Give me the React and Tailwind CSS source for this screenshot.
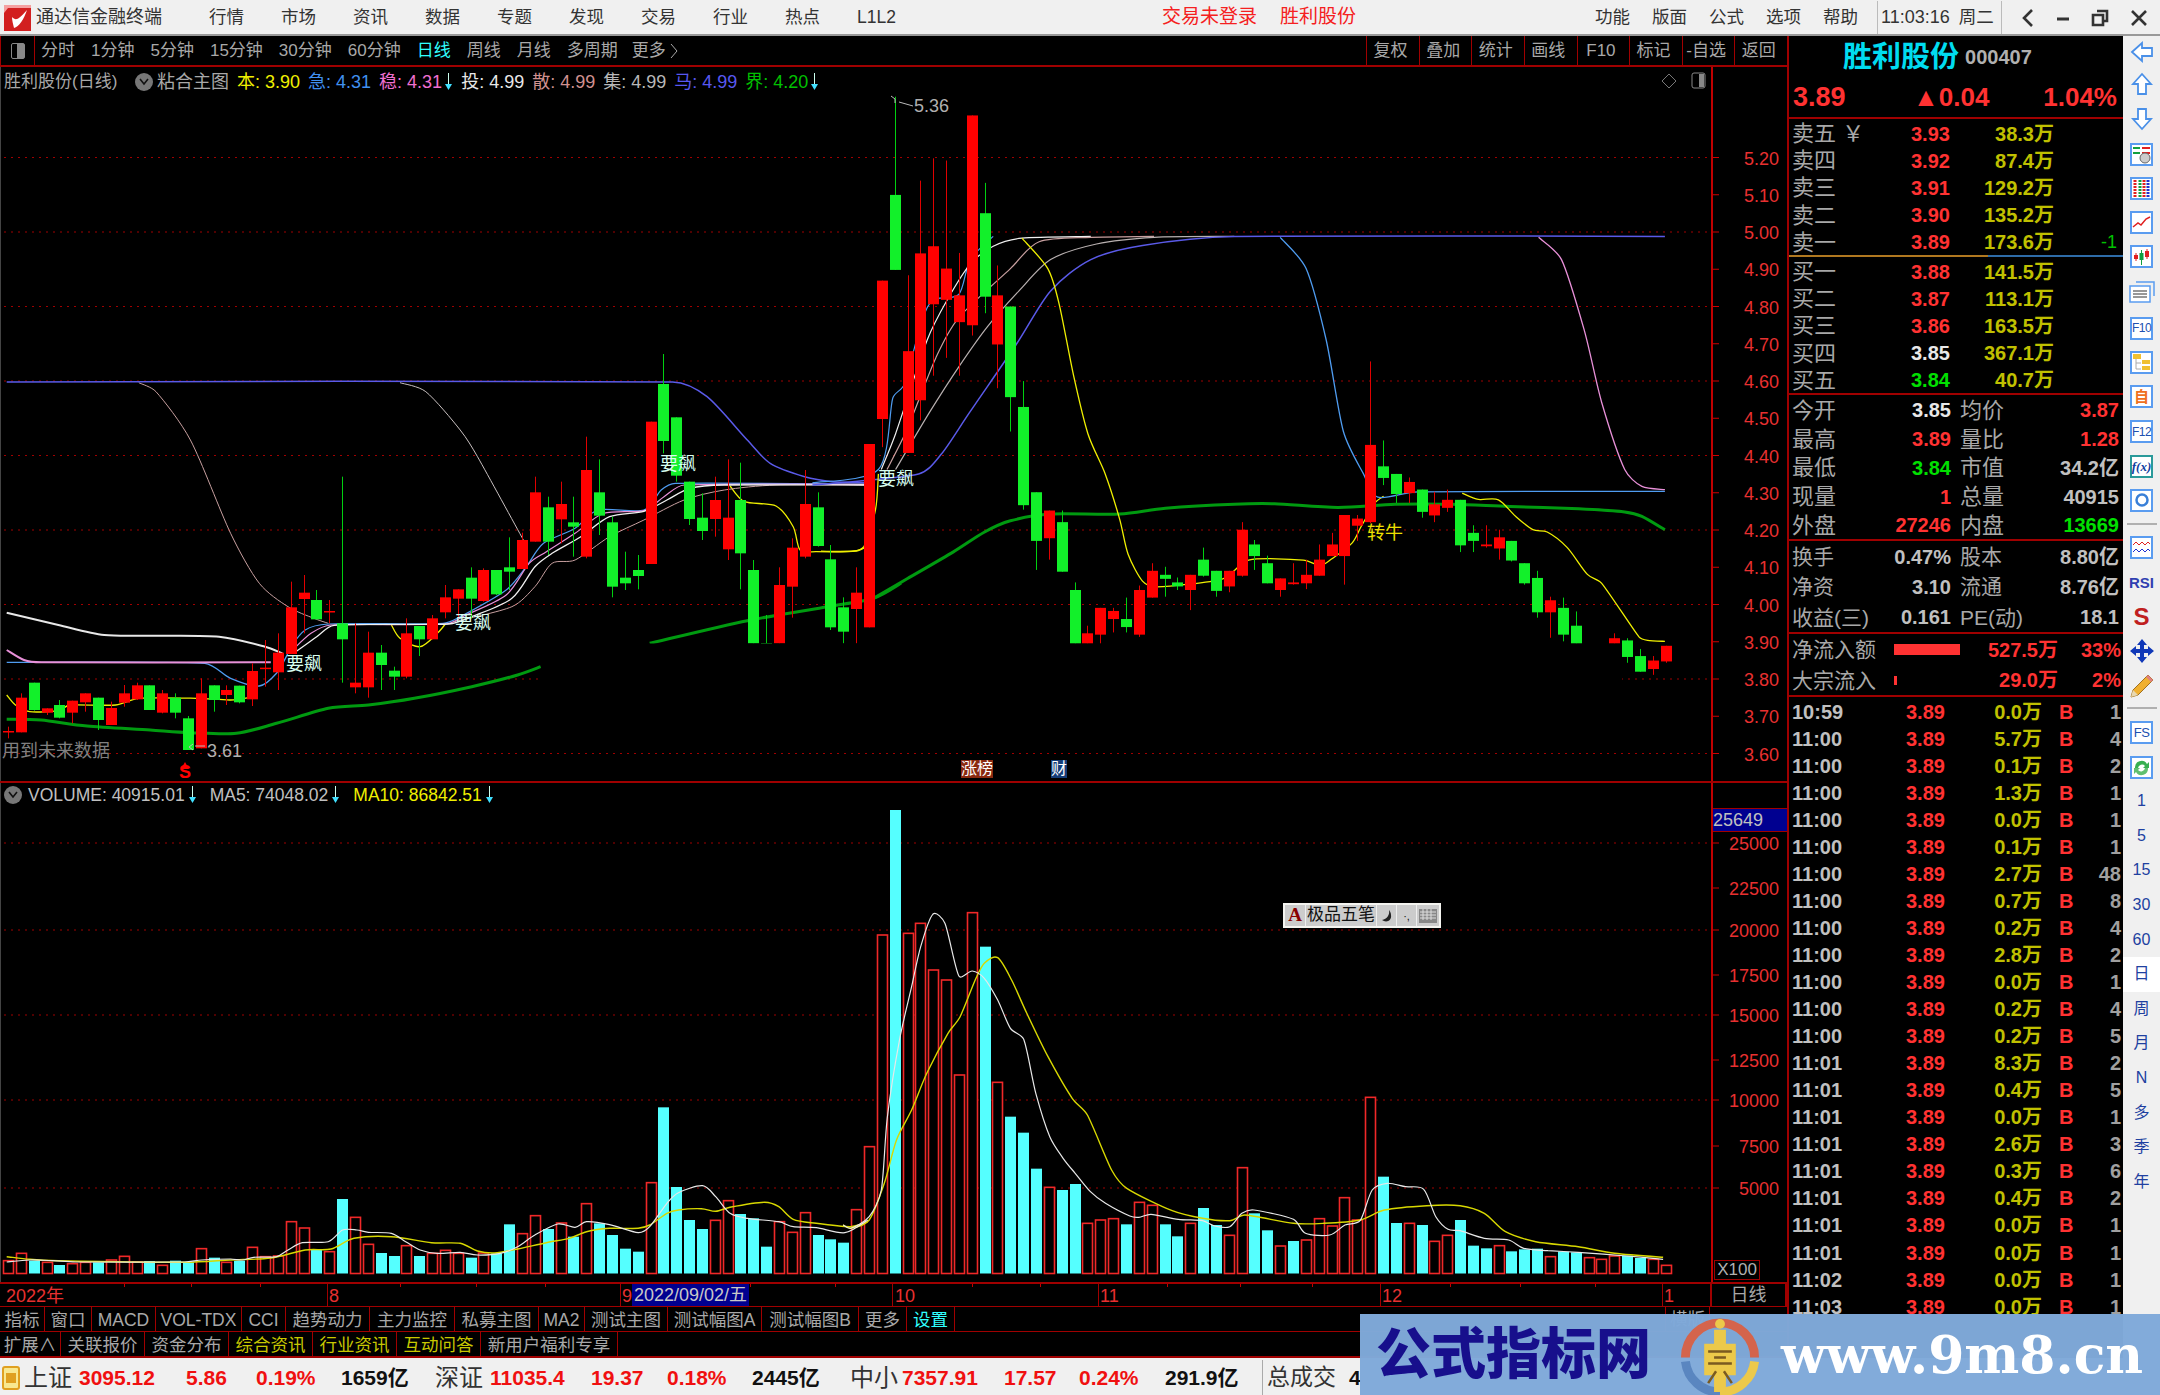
import React from 'react';

// reference zoom crops -> page pixels
const z7 = ([x, y]) => [x / 1.742, 350 + y / 3];
const z8 = ([x, y]) => [820 + x / 1.742, 90 + y / 2.24];
const z9 = ([x, y]) => [x / 1.742, 1050 + y / 3];
const z10 = ([x, y]) => [850 + x / 1.65, 800 + y / 3];

// mild catmull-rom, handles capped to the segment so long flats don't overshoot
const handle = (dx, dy, len) => {
  const n = Math.hypot(dx, dy) || 1;
  const k = Math.min(n / 7, len / 3) / n;
  return [dx * k, dy * k];
};
const smooth = (arr, f) => {
  const p = arr.map(f);
  let d = `M${p[0][0].toFixed(1)} ${p[0][1].toFixed(1)}`;
  for (let i = 0; i < p.length - 1; i++) {
    const a = p[Math.max(i - 1, 0)];
    const b = p[i];
    const c = p[i + 1];
    const e = p[Math.min(i + 2, p.length - 1)];
    const len = Math.hypot(c[0] - b[0], c[1] - b[1]);
    const h1 = handle(c[0] - a[0], c[1] - a[1], len);
    const h2 = handle(e[0] - b[0], e[1] - b[1], len);
    d += `C${(b[0] + h1[0]).toFixed(1)} ${(b[1] + h1[1]).toFixed(1)} ${(c[0] - h2[0]).toFixed(1)} ${(c[1] - h2[1]).toFixed(1)} ${c[0].toFixed(1)} ${c[1].toFixed(1)}`;
  }
  return d;
};

// top, bottom, wick top, wick bottom, colour
const CANDLES_A = [
  [1143,1147,1130,1165,'r'],[1043,1147,1030,1147,'r'],[998,1080,998,1082,'g'],[1075,1088,1075,1095,'r'],[1065,1103,1050,1105,'g'],
  [1052,1088,1052,1120,'r'],[1030,1057,1030,1085,'r'],[1043,1110,1043,1140,'g'],[1074,1125,1055,1125,'r'],[1030,1058,1005,1070,'r'],
  [1006,1048,998,1050,'r'],[1006,1080,1006,1080,'g'],[1030,1088,1020,1090,'r'],[1043,1088,1030,1105,'g'],[1105,1200,1098,1200,'g'],
  [1030,1195,985,1195,'r'],[1006,1050,1006,1085,'g'],[1020,1035,1006,1065,'r'],[1007,1057,1007,1060,'g'],[963,1048,940,1068,'r'],
  [953,957,870,1010,'r'],[908,967,850,1020,'r'],[772,912,695,912,'r'],[728,747,675,850,'r'],[750,808,720,808,'g'],
  [783,787,750,820,'r'],[820,868,380,998,'g'],[998,1012,820,1030,'r'],[908,1012,845,1043,'r'],[908,945,885,1020,'g'],
  [962,980,950,1020,'g'],[850,980,805,985,'r'],[828,868,828,918,'g'],[805,868,795,868,'r'],[742,787,705,805,'r'],
  [718,746,718,805,'r'],[683,746,652,805,'g'],[660,753,655,755,'r'],[660,733,660,735,'g'],[652,665,562,720,'g'],
  [570,657,548,657,'r'],[427,575,380,575,'r'],[472,575,440,615,'g'],[462,508,395,580,'r'],[517,530,440,620,'g'],
  [360,620,260,625,'r'],[427,497,328,555,'g'],[517,710,500,742,'g'],[683,700,605,720,'g'],[660,678,615,718,'g'],
  [215,642,215,642,'r'],[102,273,12,310,'g'],[202,377,202,395,'g'],[395,507,395,525,'g'],[503,543,430,570,'g'],
  [450,507,380,560,'r'],[503,598,328,630,'r'],[450,610,338,718,'g'],[660,880,630,880,'g'],[880,900,795,880,'g'],
  [705,880,652,880,'r'],[593,710,565,803,'r'],[462,620,360,625,'r'],[472,588,427,590,'g'],[628,832,585,840,'g'],
  [772,845,742,880,'g'],[728,777,652,880,'r'],[282,832,282,832,'r'],
];
const CANDLES_B = [
  [427,737,427,800,'r'],[235,403,15,403,'g'],[585,813,415,813,'r'],[366,695,203,740,'r'],[350,480,153,640,'r'],
  [400,470,158,600,'r'],[460,520,365,640,'r'],[57,527,57,550,'r'],[276,463,208,500,'g'],[460,570,393,668,'r'],
  [485,688,485,765,'g'],[710,930,652,940,'g'],[901,1010,901,1075,'g'],[942,1004,942,1052,'r'],[968,1079,942,1079,'g'],
  [1120,1240,1103,1240,'g'],[1217,1240,1200,1240,'r'],[1160,1220,1160,1240,'r'],[1167,1185,1160,1215,'r'],[1185,1203,1137,1215,'g'],
  [1120,1220,1110,1225,'r'],[1077,1137,1060,1137,'r'],[1086,1095,1068,1135,'g'],[1103,1112,1092,1120,'g'],[1086,1120,1086,1165,'r'],
  [1052,1088,1025,1090,'g'],[1077,1122,1077,1135,'g'],[1077,1112,1077,1125,'r'],[985,1088,968,1090,'r'],[1018,1044,1008,1075,'g'],
  [1060,1105,1043,1105,'g'],[1094,1120,1094,1135,'r'],[1103,1107,1060,1108,'r'],[1086,1105,1052,1118,'r'],[1052,1088,1018,1088,'r'],
  [1018,1044,992,1044,'r'],[952,1044,952,1108,'r'],[960,976,952,1010,'r'],[795,968,608,970,'r'],[843,869,785,885,'g'],
  [860,905,860,925,'g'],[878,903,868,925,'r'],[895,945,895,958,'g'],[928,953,900,968,'r'],[918,936,895,945,'r'],
  [918,1020,918,1035,'g'],[992,1010,975,1035,'g'],[1018,1022,975,1025,'r'],[1002,1027,985,1052,'r'],[1010,1054,1010,1056,'g'],
  [1060,1105,1060,1108,'g'],[1093,1170,1077,1182,'g'],[1143,1170,1135,1227,'r'],[1160,1220,1137,1235,'g'],[1200,1240,1168,1240,'g'],
  [1260,1280,1260,1280,'g'],[1260,1280,1260,1280,'r'],[1228,1240,1217,1240,'r'],[1233,1270,1228,1283,'g'],[1268,1303,1252,1303,'g'],
  [1278,1297,1268,1310,'r'],[1245,1280,1245,1283,'r'],
];

const VOL_A = [
  [632,'r'],[610,'r'],[632,'c'],[637,'r'],[645,'c'],[641,'r'],[637,'r'],[637,'c'],[630,'r'],[619,'r'],[636,'r'],[633,'c'],[646,'r'],[632,'c'],[637,'c'],
  [596,'r'],[623,'c'],[637,'r'],[632,'c'],[592,'r'],[620,'r'],[618,'r'],[515,'r'],[534,'r'],[598,'c'],[605,'r'],[447,'c'],[502,'r'],[583,'r'],[609,'c'],
  [618,'c'],[587,'r'],[618,'c'],[610,'r'],[601,'r'],[610,'r'],[623,'c'],[609,'r'],[610,'c'],[523,'c'],[551,'r'],[497,'r'],[537,'c'],[519,'r'],[560,'c'],
  [461,'r'],[520,'c'],[555,'c'],[596,'c'],[605,'c'],[398,'r'],[172,'c'],[411,'c'],[510,'c'],[537,'c'],[511,'r'],[452,'r'],[492,'c'],[505,'c'],[590,'c'],
  [515,'r'],[547,'r'],[488,'r'],[555,'c'],[568,'c'],[578,'c'],[479,'r'],[290,'r'],
];
const VOL_B = [
  [405,'r'],[30,'c'],[400,'r'],[370,'r'],[510,'r'],[540,'r'],[825,'r'],[338,'r'],[440,'c'],[847,'r'],[950,'c'],[998,'c'],[1106,'c'],[1162,'r'],[1170,'c'],
  [1152,'c'],[1270,'r'],[1260,'r'],[1256,'r'],[1273,'c'],[1207,'r'],[1216,'r'],[1273,'c'],[1309,'c'],[1270,'r'],[1224,'c'],[1275,'c'],[1306,'r'],[1103,'r'],[1240,'c'],
  [1291,'c'],[1338,'r'],[1323,'c'],[1320,'r'],[1256,'r'],[1278,'r'],[1193,'r'],[1260,'r'],[892,'r'],[1130,'c'],[1269,'c'],[1270,'r'],[1275,'c'],[1324,'r'],[1306,'r'],
  [1260,'c'],[1337,'c'],[1345,'c'],[1337,'r'],[1354,'c'],[1348,'c'],[1346,'c'],[1370,'r'],[1355,'c'],[1357,'c'],[1373,'r'],[1378,'r'],[1368,'r'],[1367,'c'],[1374,'c'],[1378,'r'],[1396,'r'],
];

const PRICE_LINES = [
  { c: '#c8a0a0', w: 1, f: z7, p: [[240,98],[270,125],[330,270],[400,550],[450,700],[500,770],[545,805],[570,820]] },
  { c: '#c8c0c0', w: 1, f: z7, p: [[695,98],[740,125],[800,240],[830,320],[910,570]] },
  { c: '#e8e8e8', w: 2, f: z7, p: [[10,788],[100,825],[180,855],[270,857],[380,860],[460,890],[490,910]] },
  { c: '#4f9cf0', w: 1.3, f: z7, p: [[10,937],[70,937],[355,940],[400,985],[450,1008],[480,970],[500,910]] },
  { c: '#e890d8', w: 2, f: z7, p: [[10,900],[40,930],[70,937],[470,937]] },
  { c: '#f0f000', w: 1.3, f: z7, p: [[10,1035],[25,1065],[50,1085],[100,1082],[120,1065],[200,1065],[240,1045],[340,1045],[400,1050],[440,1040]] },
  { c: '#f0f000', w: 1.3, f: z7, p: [[680,825],[695,865],[730,890],[760,850],[775,820]] },
  { c: '#f0f000', w: 1.3, f: z7, p: [[1270,408],[1295,455],[1350,468],[1380,530],[1392,600],[1420,605],[1490,603],[1512,585]] },
  { c: '#5a5ae8', w: 1.5, f: z7, p: [[10,96],[1170,96],[1230,140],[1300,270],[1340,340],[1400,380],[1450,395],[1505,398]] },
  { c: '#c8a0a0', w: 1, f: z7, p: [[790,815],[890,770],[930,710],[960,640],[1000,630],[1060,560],[1120,510],[1190,450],[1260,420],[1350,405],[1505,405]] },
  { c: '#4f9cf0', w: 1.2, f: z7, p: [[500,900],[530,840],[570,822],[770,820],[800,800],[880,720],[915,650],[945,580],[1000,535],[1040,480],[1120,480],[1150,420],[1175,400],[1505,402]] },
  { c: '#e890d8', w: 1.2, f: z7, p: [[505,905],[540,850],[575,825],[775,822],[810,795],[880,735],[920,640],[950,605],[1000,550],[1050,490],[1120,482],[1155,440],[1190,405],[1505,403]] },
  { c: '#f0f0f0', w: 1.3, f: z7, p: [[510,910],[550,860],[580,826],[780,822],[820,800],[890,745],[930,650],[960,610],[1010,560],[1060,500],[1120,484],[1160,450],[1200,415],[1260,405],[1505,405]] },
  { c: '#009a10', w: 3, f: z7, p: [[10,1108],[70,1110],[150,1128],[260,1140],[330,1148],[410,1150],[480,1120],[570,1075],[640,1065],[720,1045],[820,1010],[900,975],[940,950]] },
  { c: '#009a10', w: 3, f: z7, p: [[1130,880],[1300,812],[1440,770],[1520,745],[1568,700]] },
  { c: '#009a10', w: 3, f: z8, p: [[90,1140],[150,1095],[230,1035],[285,990],[330,965],[400,950],[520,950],[600,937],[720,928],[790,927],[900,935],[1000,928],[1100,928],[1200,933],[1320,938],[1400,945],[1430,955],[1470,985]] },
  { c: '#4f9cf0', w: 1.2, f: z8, p: [[-15,880],[100,850],[125,690],[145,660],[175,520],[195,470],[240,458],[260,380],[300,328]] },
  { c: '#f0f0f0', w: 1.2, f: z8, p: [[105,850],[130,770],[185,560],[220,470],[260,390],[300,350],[350,332],[470,328]] },
  { c: '#c8a0a0', w: 1.2, f: z8, p: [[115,850],[150,760],[200,600],[240,510],[330,400],[380,340],[470,330],[580,328]] },
  { c: '#b8b0b0', w: 1.2, f: z8, p: [[130,850],[190,720],[240,620],[290,530],[345,450],[400,380],[480,345],[580,330],[720,328]] },
  { c: '#5a5ae8', w: 1.5, f: z8, p: [[-15,885],[170,860],[210,815],[260,720],[340,570],[400,450],[470,380],[560,348],[720,328],[1470,328]] },
  { c: '#f0f000', w: 1.3, f: z8, p: [[0,1033],[55,1033],[75,1022],[95,940],[100,860]] },
  { c: '#f0f000', w: 1.3, f: z8, p: [[350,332],[395,400],[415,480],[440,640],[465,770],[495,860],[520,960],[535,1040],[560,1100],[585,1113],[700,1095],[745,1053],[840,1053],[870,1065],[890,1050],[925,1015],[940,980],[965,925],[980,910]] },
  { c: '#f0f000', w: 1.3, f: z8, p: [[1117,903],[1145,917],[1180,918],[1210,955],[1240,985],[1265,990],[1300,1025],[1335,1085],[1360,1105],[1425,1225],[1440,1233],[1470,1235]] },
  { c: '#4f9cf0', w: 1.3, f: z8, p: [[800,330],[845,400],[880,560],[910,765],[945,860],[970,912],[1040,900],[1470,899]] },
  { c: '#e890d8', w: 1.3, f: z8, p: [[1250,330],[1290,380],[1330,540],[1360,700],[1400,850],[1430,888],[1470,895]] },
];

const WHITE_Z9 = [[10,636],[50,630],[90,632],[130,636],[320,636],[350,630],[400,627],[420,630],[440,622],[480,620],[500,600],[525,578],[570,575],[595,540],[620,540],[640,547],[680,550],[705,575],[730,600],[760,610],[800,607],[830,615],[870,610],[900,590],[930,555],[970,522],[1000,532],[1020,515],[1060,524],[1110,548],[1130,530],[1160,460],[1180,428],[1222,407],[1245,440],[1270,490],[1300,505],[1355,515],[1380,530],[1420,533],[1470,548],[1510,510]];
const WHITE_Z10 = [[-13,1275],[0,1285],[30,1250],[50,1170],[60,950],[80,720],[100,560],[115,440],[135,343],[155,370],[178,528],[200,513],[220,535],[242,600],[263,685],[285,718],[305,880],[328,1010],[350,1075],[370,1120],[395,1175],[420,1210],[460,1248],[475,1252],[495,1243],[540,1258],[580,1262],[600,1278],[625,1280],[645,1240],[665,1230],[730,1258],[750,1300],[790,1305],[815,1275],[840,1262],[860,1170],[885,1150],[915,1160],[945,1168],[965,1250],[985,1288],[1005,1292],[1045,1315],[1085,1320],[1110,1345],[1150,1352],[1200,1357],[1280,1368],[1340,1378]];
const YELLOW_Z9 = [[10,620],[50,628],[100,632],[320,637],[400,630],[470,624],[530,600],[575,597],[615,565],[680,560],[750,578],[800,580],[830,603],[860,609],[900,597],[950,578],[990,565],[1020,545],[1060,535],[1110,535],[1130,525],[1160,490],[1180,480],[1220,476],[1245,484],[1270,472],[1330,457],[1355,470],[1380,508],[1420,520],[1480,530],[1510,515]];
const YELLOW_Z10 = [[-13,1275],[0,1285],[30,1260],[55,1150],[75,1020],[100,930],[125,820],[160,700],[180,650],[205,540],[220,490],[242,473],[265,540],[290,640],[325,770],[365,895],[390,945],[430,1110],[455,1165],[530,1232],[580,1255],[625,1262],[650,1245],[730,1270],[780,1270],[840,1260],[880,1230],[950,1217],[1005,1217],[1045,1240],[1080,1295],[1130,1325],[1200,1340],[1260,1360],[1340,1372]];

const PRICE_AXIS = ['5.20','5.10','5.00','4.90','4.80','4.70','4.60','4.50','4.40','4.30','4.20','4.10','4.00','3.90','3.80','3.70','3.60'];
const VOL_AXIS = [['25000',843],['22500',888],['20000',930],['17500',975],['15000',1015],['12500',1060],['10000',1100],['7500',1146],['5000',1188]];

const barX = (i) => 7 + 12.85 * i;
const priceY = (p) => 232 - (p - 5) * 372.5;

function DownArrow() {
  return (
    <svg width="9" height="20" viewBox="0 0 9 20" className="shrink-0">
      <path d="M4.5 1V13" stroke="#cfe" strokeWidth="1" />
      <path d="M1 12H8L4.5 18Z" fill="#40e0ff" />
    </svg>
  );
}

function Chevron() {
  return (
    <span className="flex h-[18px] w-[18px] shrink-0 items-center justify-center rounded-full bg-[#777]">
      <svg width="10" height="8" viewBox="0 0 10 8"><path d="M1 1L5 6L9 1" stroke="#111" strokeWidth="1.6" fill="none" /></svg>
    </span>
  );
}

function LogoMark() {
  return (
    <svg width="27" height="26" viewBox="0 0 27 26">
      <rect width="27" height="26" fill="#d21f1f" />
      <path d="M0 0H27V3H4L0 8Z" fill="#f5a0a0" />
      <path d="M8 12C12 16 14 15 23 5C20 14 15 22 10 23C9 19 8 15 8 12Z" fill="#fff" />
    </svg>
  );
}

function TitleBar() {
  const menu = ['行情', '市场', '资讯', '数据', '专题', '发现', '交易', '行业', '热点', 'L1L2'];
  const right = ['功能', '版面', '公式', '选项', '帮助'];
  return (
    <div className="flex h-[36px] items-center border-b-2 border-[#999] bg-[#f0f0f0] pt-[1px] text-[17.5px] text-[#333]">
      <span className="ml-[4px]"><LogoMark /></span>
      <span className="ml-[5px] w-[173px] text-[18px]">通达信金融终端</span>
      <div className="flex gap-[37px]">
        {menu.map((m) => <span key={m} className="w-[35px] whitespace-nowrap">{m}</span>)}
      </div>
      <div className="ml-[270px] flex gap-[23px] text-[19px] text-[#f52020]">
        <span>交易未登录</span>
        <span>胜利股份</span>
      </div>
      <div className="ml-[239px] flex gap-[22px]">
        {right.map((m) => <span key={m} className="w-[35px] whitespace-nowrap">{m}</span>)}
      </div>
      <div className="ml-[19px] flex h-full items-center gap-[9px] border-x border-[#bbb] pl-[3px] pr-[7px]">
        <span className="text-[18px]">11:03:16</span>
        <span>周二</span>
      </div>
      <div className="ml-[19px] flex w-[127px] items-center justify-between">
        <svg width="14" height="20" viewBox="0 0 14 20"><path d="M11 2L3 10L11 18" stroke="#333" strokeWidth="2.6" fill="none" /></svg>
        <svg width="14" height="20" viewBox="0 0 14 20"><path d="M1 11H13" stroke="#333" strokeWidth="3" /></svg>
        <svg width="18" height="20" viewBox="0 0 18 20"><path d="M6 3H16V13H12M2 7H12V17H2Z" stroke="#333" strokeWidth="2.6" fill="none" /></svg>
        <svg width="18" height="20" viewBox="0 0 18 20"><path d="M2 3L16 17M16 3L2 17" stroke="#333" strokeWidth="2.6" /></svg>
      </div>
    </div>
  );
}

function Toolbar() {
  const periods = ['分时', '1分钟', '5分钟', '15分钟', '30分钟', '60分钟', '日线', '周线', '月线', '多周期'];
  const tools = ['复权', '叠加', '统计', '画线', 'F10', '标记', '-自选', '返回'];
  return (
    <div className="flex h-[31px] items-stretch justify-between border-b-2 border-[#a00000] bg-black text-[17px] text-[#a8a8a8]">
      <div className="flex items-center">
        <div className="flex h-full w-[35px] items-center justify-center border-x border-[#a00000]">
          <span className="flex h-[16px] w-[14px] items-center justify-end rounded-[2px] border border-[#888]"><span className="h-full w-[7px] bg-[#888]" /></span>
        </div>
        <div className="ml-[6px] flex items-center gap-[16px]">
          {periods.map((p) => (
            <span key={p} className={p === '日线' ? 'whitespace-nowrap text-[#30ffff]' : 'whitespace-nowrap'}>{p}</span>
          ))}
          <span className="-ml-[2px] flex items-center gap-[4px] whitespace-nowrap">更多
            <svg width="8" height="18" viewBox="0 0 8 18"><path d="M1 2L7 9L1 16" stroke="#aaa" fill="none" /></svg>
          </span>
        </div>
      </div>
      <div className="flex">
        {tools.map((t) => (
          <span key={t} className="flex w-[52.6px] items-center justify-center whitespace-nowrap border-l border-[#a00000] pr-[5px]">{t}</span>
        ))}
      </div>
    </div>
  );
}

function InfoRow() {
  const items = [
    ['本: 3.90', 'text-[#f0f000]'], ['急: 4.31', 'text-[#4090f0]'], ['稳: 4.31', 'text-[#f070d0]', true],
    ['投: 4.99', 'text-[#e8e8e8]'], ['散: 4.99', 'text-[#d09090]'], ['集: 4.99', 'text-[#b8b8b8]'],
    ['马: 4.99', 'text-[#5858f0]'], ['界: 4.20', 'text-[#00c000]', true],
  ];
  return (
    <div className="absolute left-[3px] top-[2px] flex h-[26px] items-center text-[18px]">
      <span className="w-[131px] whitespace-nowrap text-[17px] text-[#a8a8a8]">胜利股份(日线)</span>
      <Chevron />
      <span className="ml-[4px] mr-[8px] text-[#a8a8a8]">粘合主图</span>
      <div className="flex gap-[8px]">
        {items.map(([t, c, arrow]) => (
          <span key={t + c} className={`flex items-center gap-[2px] whitespace-nowrap ${c}`}>{t}{arrow && <DownArrow />}</span>
        ))}
      </div>
    </div>
  );
}

function PriceChart() {
  const candle = (data, f, start) =>
    data.map(([top, bot, wt, wb, col], k) => {
      const i = start + k;
      const x = barX(i);
      const [, y1] = f([0, top]);
      const [, y2] = f([0, bot]);
      const [, w1] = f([0, wt]);
      const [, w2] = f([0, wb]);
      const fill = col === 'r' ? '#ff0000' : '#12f02a';
      return (
        <g key={i}>
          <rect x={Math.round(x)} y={w1} width="1" height={Math.max(w2 - w1, 0)} fill={col === 'r' ? '#e00000' : '#00d010'} />
          <rect x={Math.round(x) - 5} y={y1} width="11" height={Math.max(y2 - y1, 1.5)} fill={fill} />
        </g>
      );
    });
  return (
    <div className="relative h-[714px] border-l border-[#444]">
      <svg width="1786" height="714" viewBox="0 67 1786 714" className="block">
        {[5.2, 5.0, 4.8, 4.6, 4.4, 4.2, 4.0, 3.8, 3.6].map((p) => (
          <line key={p} x1="3" x2="1710" y1={priceY(p)} y2={priceY(p)} stroke="#a00000" strokeWidth="1" strokeDasharray="2 5" />
        ))}
        {PRICE_LINES.map((l, i) => (
          <path key={i} d={smooth(l.p, l.f)} fill="none" stroke={l.c} strokeWidth={l.w} strokeLinejoin="round" />
        ))}
        {candle(CANDLES_A, z7, 0)}
        {candle(CANDLES_B, z8, 68)}
        {/* blacked out strip of the source picture */}
        <rect x="540" y="643.5" width="1081" height="101" fill="#000" />
        <rect x="1710" y="67" width="2" height="714" fill="#c00000" />
        {PRICE_AXIS.map((p) => (
          <line key={p} x1="1712" x2="1718" y1={priceY(Number(p))} y2={priceY(Number(p))} stroke="#d00000" />
        ))}
        <path d="M894 99L890 96M894 99V103M898 102L912 106" stroke="#bbb" fill="none" />
        <path d="M194 746H204M188 747L192 744M188 747L192 750" stroke="#bbb" fill="none" />
        <path d="M184 762L188 769H180Z" fill="#ff0000" />
        <path d="M1668 74L1675 81L1668 88L1661 81Z" stroke="#777" fill="none" />
        <rect x="1691" y="73" width="13" height="15" rx="2" stroke="#888" fill="none" />
        <rect x="1698" y="74" width="5" height="13" fill="#888" />
      </svg>
      <InfoRow />
      {PRICE_AXIS.map((p) => (
        <span key={p} className="absolute right-[8px] -translate-y-1/2 text-[18px] leading-none text-[#e83030]" style={{ top: priceY(Number(p)) - 66 }}>{p}</span>
      ))}
      <span className="absolute left-[913px] top-[30px] text-[18px] leading-none text-[#b0b0b0]">5.36</span>
      <span className="absolute left-[206px] top-[675px] text-[18px] leading-none text-[#b0b0b0]">3.61</span>
      <span className="absolute left-[1px] top-[675px] text-[18px] leading-none text-[#808080]">用到未来数据</span>
      <span className="absolute left-[178px] top-[696px] text-[18px] font-bold leading-none text-[#ff0000]">S</span>
      <span className="absolute left-[285px] top-[588px] text-[18px] leading-none text-[#d8fff0]">要飙</span>
      <span className="absolute left-[454px] top-[547px] text-[18px] leading-none text-[#d8fff0]">要飙</span>
      <span className="absolute left-[659px] top-[388px] text-[18px] leading-none text-[#d8fff0]">要飙</span>
      <span className="absolute left-[877px] top-[403px] text-[18px] leading-none text-[#d8fff0]">要飙</span>
      <span className="absolute left-[1366px] top-[457px] text-[18px] leading-none text-[#f0e000]">转牛</span>
      <span className="absolute left-[960px] top-[693px] bg-[#8a2a10] text-[16px] leading-[18px] text-white">涨榜</span>
      <span className="absolute left-[1050px] top-[693px] bg-[#143c78] text-[16px] leading-[18px] text-white">财</span>
    </div>
  );
}

function ImeBar() {
  return (
    <div className="absolute left-[1282px] top-[120px] flex h-[25px] w-[158px] items-stretch gap-[1px] border-2 border-[#f4f4f0] bg-[#eee] text-[17px] leading-[20px] text-[#111]">
      <span className="w-[20px] bg-[#ccc] text-center font-['Liberation_Serif',serif] text-[19px] font-bold text-[#8a0000]">A</span>
      <span className="w-[70px] whitespace-nowrap bg-[#ccc] text-center">极品五笔</span>
      <span className="flex w-[19px] items-center justify-center bg-[#ccc]">
        <svg width="12" height="14" viewBox="0 0 12 14"><path d="M8 1C9 6 6 10 1 11C5 14 11 12 10 6C10 4 9 2 8 1Z" fill="#222" /></svg>
      </span>
      <span className="flex w-[19px] items-center justify-center bg-[#ccc] text-[11px]">·,</span>
      <span className="flex flex-1 items-center justify-center bg-[#ccc]">
        <svg width="18" height="14" viewBox="0 0 18 14"><rect width="18" height="14" fill="#888" /><path d="M1 3H17M1 6H17M1 9H17M4 0V11M8 0V11M12 0V11" stroke="#ddd" /></svg>
      </span>
    </div>
  );
}

function VolumeChart() {
  const bar = (data, f, start) =>
    data.map(([top, col], k) => {
      const i = start + k;
      const x = Math.round(barX(i)) - 5;
      const [, y] = f([0, top]);
      return col === 'c'
        ? <rect key={i} x={x} y={y} width="11" height={1273.5 - y} fill="#55ffff" />
        : <rect key={i} x={x + 0.5} y={y} width="10" height={1273.5 - y} fill="#000" stroke="#f02828" strokeWidth="1.6" />;
    });
  return (
    <div className="relative h-[499px] border-l border-[#444]">
      <svg width="1786" height="499" viewBox="0 783 1786 499" className="block">
        {[843, 930, 1015, 1100, 1188].map((y) => (
          <line key={y} x1="3" x2="1710" y1={y} y2={y} stroke="#a00000" strokeDasharray="2 5" />
        ))}
        {bar(VOL_A, z9, 0)}
        {bar(VOL_B, z10, 68)}
        <path d={smooth(YELLOW_Z9, z9)} fill="none" stroke="#d8d800" strokeWidth="1.4" />
        <path d={smooth(YELLOW_Z10, z10)} fill="none" stroke="#d8d800" strokeWidth="1.4" />
        <path d={smooth(WHITE_Z9, z9)} fill="none" stroke="#e8e8e8" strokeWidth="1.2" />
        <path d={smooth(WHITE_Z10, z10)} fill="none" stroke="#e8e8e8" strokeWidth="1.2" />
        <rect x="1710" y="783" width="2" height="499" fill="#c00000" />
        {VOL_AXIS.map(([t, y]) => <line key={t} x1="1712" x2="1718" y1={y} y2={y} stroke="#d00000" />)}
      </svg>
      <div className="absolute left-[3px] top-[1px] flex h-[22px] items-center gap-[6px] text-[17.5px]">
        <Chevron />
        <span className="flex items-center gap-[3px] whitespace-nowrap text-[#c0c0c0]">VOLUME: 40915.01<DownArrow /></span>
        <span className="ml-[7px] flex items-center gap-[3px] whitespace-nowrap text-[#c0c0c0]">MA5: 74048.02<DownArrow /></span>
        <span className="ml-[7px] flex items-center gap-[3px] whitespace-nowrap text-[#f0f000]">MA10: 86842.51<DownArrow /></span>
      </div>
      <span className="absolute left-[1712px] top-[25px] flex h-[24px] w-[74px] items-center border-y border-[#a00000] bg-[#000090] text-[18px] text-[#c0c0c0]">25649</span>
      {VOL_AXIS.map(([t, y]) => (
        <span key={t} className="absolute right-[8px] -translate-y-1/2 text-[18px] leading-none text-[#e83030]" style={{ top: y - 782 }}>{t}</span>
      ))}
      <span className="absolute left-[1713px] top-[477px] flex h-[20px] w-[46px] items-center justify-center border border-[#a00000] text-[17px] text-[#b0b0b0]">X100</span>
      <ImeBar />
    </div>
  );
}

function DateRow() {
  const labels = [['2022年', 6], ['8', 329], ['9', 622], ['10', 895], ['11', 1100], ['12', 1382], ['1', 1664]];
  const ticks = [124, 191, 260, 327, 400, 476, 545, 620, 750, 835, 892, 972, 1040, 1098, 1167, 1240, 1312, 1380, 1450, 1520, 1595, 1662];
  return (
    <div className="relative flex h-[24px] border-t-2 border-[#a00000] bg-black text-[18px] text-[#e83030]">
      {ticks.map((x) => <span key={x} className="absolute top-0 h-[3px] w-px bg-[#c00000]" style={{ left: x }} />)}
      {[327, 620, 892, 1098, 1380, 1662].map((x) => <span key={x} className="absolute top-0 h-[22px] w-px bg-[#a00000]" style={{ left: x }} />)}
      {labels.map(([t, x]) => <span key={t} className="absolute top-[2px] leading-[20px]" style={{ left: x }}>{t}</span>)}
      <span className="absolute left-[632px] top-0 flex h-[22px] w-[117px] items-center justify-center bg-[#000090] pt-[1px] text-[#c8c8c8]">2022/09/02/五</span>
      <span className="absolute left-[1710px] top-0 flex h-[22px] w-[77px] items-center justify-center border-x-2 border-[#a00000] pt-[1px] text-[#a8a8a8]">日线</span>
    </div>
  );
}

function TabRows() {
  const row1 = [['指标',45],['窗口',47],['MACD',64],['VOL-TDX',86],['CCI',44],['趋势动力',84],['主力监控',85],['私募主图',84],['MA2',46],['测试主图',83],['测试幅图A',94],['测试幅图B',97],['更多',48],['设置',48,'text-[#30ffff]']];
  const row2 = [['扩展∧',61],['关联报价',84],['资金分布',84],['综合资讯',84,'text-[#c8c800]'],['行业资讯',84,'text-[#c8c800]'],['互动问答',84,'text-[#c8c800]'],['新用户福利专享',137]];
  const tab = ([t, w, c]) => (
    <span key={t} className={`flex items-center justify-center whitespace-nowrap border-r border-[#a00000] pt-[2px] ${c || 'text-[#a8a8a8]'}`} style={{ width: w }}>{t}</span>
  );
  return (
    <div className="text-[17.5px]">
      <div className="flex h-[26px] border-y border-[#a00000] bg-black">
        {row1.map(tab)}
        <span className="ml-[710px] flex w-[45px] items-center justify-center border-x border-[#a00000] text-[#a8a8a8]">横版</span>
      </div>
      <div className="flex h-[26px] border-b-2 border-[#a00000] bg-black">{row2.map(tab)}</div>
    </div>
  );
}

const SELL = [['卖五', '3.93', '38.3'], ['卖四', '3.92', '87.4'], ['卖三', '3.91', '129.2'], ['卖二', '3.90', '135.2'], ['卖一', '3.89', '173.6']];
const BUY = [['买一', '3.88', '141.5', '#ff3232'], ['买二', '3.87', '113.1', '#ff3232'], ['买三', '3.86', '163.5', '#ff3232'], ['买四', '3.85', '367.1', '#e8e8e8'], ['买五', '3.84', '40.7', '#00e000']];
const STATS = [
  ['今开', '3.85', 'text-[#e8e8e8]', '均价', '3.87', 'text-[#ff3232]'],
  ['最高', '3.89', 'text-[#ff3232]', '量比', '1.28', 'text-[#ff3232]'],
  ['最低', '3.84', 'text-[#00e000]', '市值', '34.2亿', 'text-[#c0c0c0]'],
  ['现量', '1', 'text-[#ff3232]', '总量', '40915', 'text-[#c0c0c0]'],
  ['外盘', '27246', 'text-[#ff3232]', '内盘', '13669', 'text-[#00e000]'],
];
const STATS2 = [
  ['换手', '0.47%', '股本', '8.80亿'],
  ['净资', '3.10', '流通', '8.76亿'],
  ['收益(三)', '0.161', 'PE(动)', '18.1'],
];
const TICKS = [
  ['10:59','0.0',1],['11:00','5.7',4],['11:00','0.1',2],['11:00','1.3',1],['11:00','0.0',1],['11:00','0.1',1],['11:00','2.7',48],['11:00','0.7',8],
  ['11:00','0.2',4],['11:00','2.8',2],['11:00','0.0',1],['11:00','0.2',4],['11:00','0.2',5],['11:01','8.3',2],['11:01','0.4',5],['11:01','0.0',1],
  ['11:01','2.6',3],['11:01','0.3',6],['11:01','0.4',2],['11:01','0.0',1],['11:01','0.0',1],['11:02','0.0',1],['11:03','0.0',1],
];

function QuoteRow({ label, price, qty, color, tail, note }) {
  return (
    <div className="flex h-[27.2px] items-center pt-[2px]">
      <span className="w-[119px] whitespace-nowrap text-[22px] font-normal text-[#a8a8a8]">{label}{note}</span>
      <span className="w-[40px] text-[20px]" style={{ color }}>{price}</span>
      <span className="w-[103px] text-right text-[20px] text-[#c0c000]">{qty}万</span>
      <span className="flex-1 pr-[6px] text-right text-[18px] font-normal text-[#00c000]">{tail}</span>
    </div>
  );
}

function QuotePanel() {
  return (
    <div className="w-[336px] overflow-hidden border-l-2 border-[#a00000] bg-black pl-[3px] font-semibold">
      <div className="flex h-[40px] items-center pl-[51px] pt-[2px]">
        <span className="text-[29px] font-bold leading-none text-[#00dcf0]">胜利股份</span>
        <span className="ml-[6px] text-[20px] text-[#b0b0b0]">000407</span>
      </div>
      <div className="-ml-[3px] flex h-[43px] items-center border-b-2 border-[#a00000] pl-[4px] pr-[6px] pt-[2px] text-[26px] font-bold text-[#ff3232]">
        <span className="w-[120px] text-[27px]">3.89</span>
        <span className="w-[110px]">▲0.04</span>
        <span className="flex-1 text-right">1.04%</span>
      </div>
      {SELL.map(([l, p, q], i) => (
        <QuoteRow key={l} label={l} price={p} qty={q} color="#ff3232" tail={i === 4 ? '-1' : ''} note={i === 0 ? ' ￥' : ''} />
      ))}
      <div className="-ml-[3px] flex h-[2px]">
        <span className="w-[199px] bg-[#b07820]" />
        <span className="flex-1 bg-[#2e6ca8]" />
      </div>
      {BUY.map(([l, p, q, c]) => <QuoteRow key={l} label={l} price={p} qty={q} color={c} />)}
      <div className="-ml-[3px] h-[2px] bg-[#a00000]" />
      {STATS.map(([a, b, bc, c, d, dc]) => (
        <div key={a} className="flex h-[28.8px] items-center pt-[2px]">
          <span className="w-[60px] text-[22px] font-normal text-[#a8a8a8]">{a}</span>
          <span className={`w-[99px] text-right text-[20px] ${bc}`}>{b}</span>
          <span className="ml-[9px] w-[50px] whitespace-nowrap text-[22px] font-normal text-[#a8a8a8]">{c}</span>
          <span className={`w-[109px] text-right text-[20px] ${dc}`}>{d}</span>
        </div>
      ))}
      <div className="-ml-[3px] h-[2px] bg-[#a00000]" />
      {STATS2.map(([a, b, c, d]) => (
        <div key={a} className="flex h-[30.4px] items-center pt-[1px] text-[#c0c0c0]">
          <span className="w-[80px] whitespace-nowrap text-[21px] font-normal text-[#a8a8a8]">{a}</span>
          <span className="w-[79px] text-right text-[20px]">{b}</span>
          <span className="ml-[9px] w-[66px] whitespace-nowrap text-[21px] font-normal text-[#a8a8a8]">{c}</span>
          <span className="w-[93px] text-right text-[20px]">{d}</span>
        </div>
      ))}
      <div className="-ml-[3px] h-[2px] bg-[#a00000]" />
      <div className="flex h-[30.5px] items-center pt-[1px] text-[20px] text-[#ff3232]">
        <span className="w-[102px] whitespace-nowrap text-[21px] font-normal text-[#a8a8a8]">净流入额</span>
        <span className="h-[11px] w-[66px] bg-[#ff3232]" />
        <span className="w-[98px] text-right">527.5万</span>
        <span className="w-[63px] text-right">33%</span>
      </div>
      <div className="flex h-[30.5px] items-center pt-[1px] text-[20px] text-[#ff3232]">
        <span className="w-[102px] whitespace-nowrap text-[21px] font-normal text-[#a8a8a8]">大宗流入</span>
        <span className="h-[9px] w-[3px] bg-[#ff3232]" />
        <span className="w-[161px] text-right">29.0万</span>
        <span className="w-[63px] text-right">2%</span>
      </div>
      <div className="-ml-[3px] h-[2px] bg-[#a00000]" />
      <div className="pt-[1px]">
        {TICKS.map(([t, q, n], i) => (
          <div key={i} className="flex h-[27.05px] items-center text-[20px]">
            <span className="w-[114px] text-[#c0c0c0]">{t}</span>
            <span className="w-[42px] text-[#ff3232]">3.89</span>
            <span className="w-[94px] text-right text-[#c0c000]">{q}万</span>
            <span className="ml-[17px] w-[14px] text-[#ff3232]">B</span>
            <span className="w-[48px] text-right text-[#a0a0a0]">{n}</span>
          </div>
        ))}
      </div>
    </div>
  );
}

function Tile({ children, color = '#5a9cf0' }) {
  return (
    <span className="flex h-[23px] w-[23px] items-center justify-center border-2 bg-white" style={{ borderColor: color }}>{children}</span>
  );
}

function SideItem({ h = 34, children }) {
  return <div className="flex items-center justify-center" style={{ height: h }}>{children}</div>;
}

function Sidebar() {
  const arrow = (d, w = 24, h = 24) => (
    <svg width={w} height={h} viewBox="0 0 24 24"><path d={d} fill="#fff" stroke="#4a90e8" strokeWidth="1.8" /></svg>
  );
  const texts = ['1', '5', '15', '30', '60', '日', '周', '月', 'N', '多', '季', '年'];
  return (
    <div className="w-[37px] bg-[#f0f0f0] text-[#2040a0]">
      <SideItem h={31}>{arrow('M2 12L12 3V8H22V16H12V21Z')}</SideItem>
      <SideItem h={34}>{arrow('M12 2L21 12H16V22H8V12H3Z')}</SideItem>
      <SideItem h={36}>{arrow('M12 22L21 12H16V2H8V12H3Z')}</SideItem>
      <SideItem>
        <Tile><svg width="19" height="19" viewBox="0 0 19 19"><path d="M1 3H8M1 8H8" stroke="#12a040" strokeWidth="2" /><path d="M10 3H18M10 8H18" stroke="#e02020" strokeWidth="2" /><circle cx="13" cy="13" r="5" fill="#ccc" stroke="#666" /></svg></Tile>
      </SideItem>
      <SideItem>
        <Tile><svg width="19" height="19" viewBox="0 0 19 19"><path d="M3 1V18" stroke="#e02020" strokeWidth="3" strokeDasharray="2 1" /><path d="M8 1V18" stroke="#12a040" strokeWidth="3" strokeDasharray="2 1" /><path d="M12 1V18" stroke="#e02020" strokeWidth="3" strokeDasharray="2 1" /><path d="M16 1V18" stroke="#2030d0" strokeWidth="3" strokeDasharray="2 1" /></svg></Tile>
      </SideItem>
      <SideItem>
        <Tile><svg width="19" height="19" viewBox="0 0 19 19"><path d="M1 14L6 10L9 12L14 6L18 4" stroke="#e02020" strokeWidth="1.5" fill="none" /></svg></Tile>
      </SideItem>
      <SideItem>
        <Tile><svg width="19" height="19" viewBox="0 0 19 19"><path d="M4 6V14M15 2V12" stroke="#e02020" /><path d="M9.5 3V18" stroke="#12a040" /><rect x="2" y="8" width="4" height="4" fill="#e02020" /><rect x="7.5" y="6" width="4" height="7" fill="#12a040" /><rect x="13" y="4" width="4" height="6" fill="#e02020" /></svg></Tile>
      </SideItem>
      <SideItem h={38}>
        <svg width="26" height="22" viewBox="0 0 26 22"><path d="M7 1H25V15" stroke="#5a9cf0" strokeWidth="1.5" fill="none" /><rect x="1" y="5" width="20" height="16" fill="#fff" stroke="#5a9cf0" strokeWidth="1.5" /><path d="M4 10H18M4 13H18M4 16H18" stroke="#777" strokeWidth="1.5" /></svg>
      </SideItem>
      <SideItem>
        <Tile><span className="text-[12px] leading-none tracking-[-0.5px] text-[#2050b0]">F10</span></Tile>
      </SideItem>
      <SideItem>
        <Tile><svg width="19" height="19" viewBox="0 0 19 19"><path d="M4 6V16H9M4 10H9" stroke="#aaa" fill="none" /><rect x="1" y="1" width="8" height="5" fill="#f0c030" /><rect x="10" y="7" width="8" height="4" fill="#f0c030" /><rect x="10" y="13" width="8" height="4" fill="#f0c030" /></svg></Tile>
      </SideItem>
      <SideItem h={35}>
        <Tile><span className="text-[15px] font-bold leading-none text-[#f07020]">自</span></Tile>
      </SideItem>
      <SideItem h={35}>
        <Tile><span className="text-[12px] leading-none tracking-[-0.5px] text-[#2050b0]">F12</span></Tile>
      </SideItem>
      <SideItem>
        <Tile color="#2a9a9a"><span className="font-['Liberation_Serif',serif] text-[13px] font-bold italic leading-none text-[#1040a0]">f(x)</span></Tile>
      </SideItem>
      <SideItem>
        <Tile><svg width="16" height="16" viewBox="0 0 16 16"><circle cx="8" cy="8" r="5.5" fill="none" stroke="#3a80d8" strokeWidth="2.5" /></svg></Tile>
      </SideItem>
      <SideItem h={13}><span className="h-[2px] w-[30px] bg-[#b0b0b0]" /></SideItem>
      <SideItem h={35}>
        <Tile><svg width="19" height="19" viewBox="0 0 19 19"><path d="M1 7L4 4L7 7L10 4L13 7L16 4L18 6" stroke="#e02020" fill="none" /><path d="M1 14L4 11L7 14L10 11L13 14L16 11L18 13" stroke="#2030d0" fill="none" /></svg></Tile>
      </SideItem>
      <SideItem h={35}><span className="text-[15px] font-bold leading-none text-[#3040b0]">RSI</span></SideItem>
      <SideItem><span className="text-[24px] font-bold leading-none text-[#c02020]">S</span></SideItem>
      <SideItem>
        <svg width="26" height="26" viewBox="0 0 26 26"><path d="M13 1L18 7H15V11H19V8L25 13L19 18V15H15V19H18L13 25L8 19H11V15H7V18L1 13L7 8V11H11V7H8Z" fill="#1038b8" /></svg>
      </SideItem>
      <SideItem>
        <svg width="26" height="26" viewBox="0 0 26 26"><path d="M4 18L19 3L24 8L9 23L2 25Z" fill="#f0b030" stroke="#a07020" /><path d="M2 25L4 18L9 23Z" fill="#e8d8b0" /><path d="M19 3L24 8L22 10L17 5Z" fill="#e08080" /></svg>
      </SideItem>
      <SideItem h={12}><span className="h-[2px] w-[30px] bg-[#b0b0b0]" /></SideItem>
      <SideItem h={36}>
        <Tile><span className="text-[13px] leading-none tracking-[-0.5px] text-[#2050b0]">FS</span></Tile>
      </SideItem>
      <SideItem>
        <Tile><svg width="19" height="19" viewBox="0 0 19 19"><path d="M3 10A6.5 6.5 0 0 1 15 6L17 4V10H11L13 8A4 4 0 0 0 6 10Z" fill="#38b050" /><path d="M16 10A6.5 6.5 0 0 1 4 14L2 16V10H8L6 12A4 4 0 0 0 13 10Z" fill="#60c070" /></svg></Tile>
      </SideItem>
      <div className="flex flex-col items-center">
        {texts.map((t) => (
          <span key={t} className={`flex h-[34.6px] w-full items-center justify-center text-[16px] ${t === '日' ? 'bg-white' : ''}`}>{t}</span>
        ))}
      </div>
    </div>
  );
}

function StatusBar() {
  const red = 'text-[#f01010] font-bold text-[21px]';
  return (
    <div className="flex h-[37px] items-center bg-[#f0f0f0] pt-[2px] text-[21px] text-[#111]">
      <span className="ml-[2px] flex h-[24px] w-[18px] items-center justify-center rounded-[3px] border-2 border-[#e0a020] bg-[#f8e890]"><span className="h-[10px] w-[10px] bg-[#e0a020]" /></span>
      <span className="ml-[4px] w-[55px] text-[24px] text-[#333]">上证</span>
      <span className={`w-[107px] ${red}`}>3095.12</span>
      <span className={`w-[70px] ${red}`}>5.86</span>
      <span className={`w-[85px] ${red}`}>0.19%</span>
      <span className="w-[94px] font-bold">1659亿</span>
      <span className="w-[55px] text-[24px] text-[#333]">深证</span>
      <span className={`w-[101px] ${red}`}>11035.4</span>
      <span className={`w-[76px] ${red}`}>19.37</span>
      <span className={`w-[85px] ${red}`}>0.18%</span>
      <span className="w-[98px] font-bold">2445亿</span>
      <span className="w-[52px] text-[24px] text-[#333]">中小</span>
      <span className={`w-[102px] ${red}`}>7357.91</span>
      <span className={`w-[75px] ${red}`}>17.57</span>
      <span className={`w-[86px] ${red}`}>0.24%</span>
      <span className="w-[97px] font-bold">291.9亿</span>
      <span className="h-full w-px bg-[#aaa]" />
      <span className="ml-[4px] w-[82px] text-[23px] text-[#333]">总成交</span>
      <span className="font-bold">4</span>
    </div>
  );
}

function Watermark() {
  return (
    <div className="absolute bottom-0 right-0 flex h-[81px] w-[800px] items-center bg-[#7fa9d9]/[0.98]">
      <span className="ml-[16px] w-[290px] whitespace-nowrap text-[55px] font-black leading-none text-[#170f8c]">公式指标网</span>
      <svg width="84" height="81" viewBox="0 0 84 82" className="ml-[12px] shrink-0">
        <path d="M7 44A35 35 0 0 1 77 44" fill="none" stroke="#d4644c" strokeWidth="9" />
        <path d="M77 48A35 35 0 0 1 42 79" fill="none" stroke="#ecc94a" strokeWidth="9" />
        <path d="M7 48A35 35 0 0 0 42 79" fill="none" stroke="#5a86c0" strokeWidth="9" />
        <circle cx="42" cy="10" r="5" fill="#ecc94a" />
        <path d="M36 16H48V30H58V62H48V79H36V62H26V30H36Z" fill="#ecc94a" />
        <path d="M30 38H54M30 50H54M36 44H48M38 58L30 70M46 58L54 70" stroke="#7a5a20" strokeWidth="2.5" />
      </svg>
      <span className="ml-[19px] whitespace-nowrap font-['DejaVu_Serif',serif] text-[52px] font-bold leading-none text-white">www.9m8.cn</span>
    </div>
  );
}

export default function App() {
  return (
    <div className="relative flex h-[1395px] w-[2160px] flex-col overflow-hidden bg-black font-['Liberation_Sans','Noto_Sans_CJK_SC',sans-serif]">
      <TitleBar />
      <div className="flex h-[1322px]">
        <div className="w-[1787px]">
          <Toolbar />
          <PriceChart />
          <div className="h-[2px] bg-[#a00000]" />
          <VolumeChart />
          <DateRow />
          <TabRows />
        </div>
        <QuotePanel />
        <Sidebar />
      </div>
      <StatusBar />
      <Watermark />
    </div>
  );
}
